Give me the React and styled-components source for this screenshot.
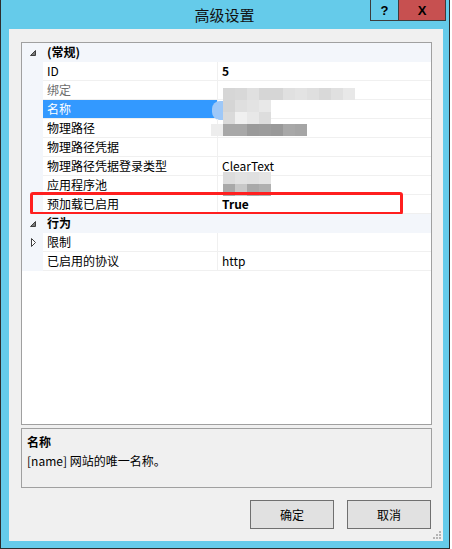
import React from 'react';
import styled, { createGlobalStyle, css } from 'styled-components';

const GlobalStyle = createGlobalStyle`
    html, body {
        margin: 0;
        padding: 0;
        background: #ffffff;
    }
    body {
        font-family: "Noto Sans CJK SC", "Liberation Sans", sans-serif;
        font-size: 12px;
        color: #000;
    }
`;

// window frame
const Frame = styled.div`
    box-sizing: border-box;
    width: 450px;
    height: 549px;
    background: #65cbea;
    border: 1px solid #2d2d2d;
    border-top: none;
    display: flex;
    flex-direction: column;
`;

const TitleBar = styled.div`
    height: 29px;
    display: grid;
    grid-template-columns: 1fr auto 1fr;
    align-items: start;
    padding-right: 3px;
`;

const Caption = styled.div`
    grid-column: 2;
    font-size: 15px;
    line-height: 29px;
    color: #111;
    margin-left: 2px;
`;

const CaptionButtons = styled.div`
    grid-column: 3;
    justify-self: end;
    display: flex;
`;

const CapBtn = styled.div`
    box-sizing: border-box;
    height: 21px;
    width: ${p => p.$w}px;
    display: flex;
    align-items: center;
    justify-content: center;
    font-family: "Liberation Sans", sans-serif;
    font-weight: bold;
    font-size: 13px;
    color: #000;
    border: 1px solid #3c3c3c;
    border-top: none;
    background: ${p => p.$bg || 'transparent'};
    & + & {
        border-left: none;
    }
`;

const Client = styled.div`
    position: relative;
    box-sizing: border-box;
    margin: 0 6px 0 8px;
    height: 512px;
    background: #f0f0f0;
    padding: 13px 11px 0 12px;
    display: flex;
    flex-direction: column;
`;

// property grid
const Grid = styled.div`
    box-sizing: border-box;
    height: 383px;
    border: 1px solid #a0a0a0;
    background: #fff;
    display: flex;
    flex-direction: column;
`;

const Row = styled.div`
    position: relative;
    display: grid;
    grid-template-columns: 21px 175px 1fr;
    height: 19px;
    ${p => p.$category && css`
        background: #f3f6fb;
    `}
`;

const Gutter = styled.div`
    background: #f3f6fb;
    display: flex;
    align-items: center;
    padding-left: ${p => p.$collapsed ? 9 : 8}px;
`;

const cellBase = css`
    box-sizing: border-box;
    height: 19px;
    line-height: 18px;
    padding-left: 4px;
    white-space: nowrap;
    border-bottom: 1px solid #f0f0f0;
`;

const Label = styled.div`
    ${cellBase}
    border-right: 1px solid #f0f0f0;
    color: ${p => p.$readonly ? '#6d6d6d' : '#000'};
    ${p => p.$selected && css`
        background: #3399ff;
        color: #fff;
    `}
`;

const Value = styled.div`
    ${cellBase}
    position: relative;
    font-weight: ${p => p.$bold ? 'bold' : 'normal'};
`;

const CategoryTitle = styled.div`
    grid-column: 2 / 4;
    line-height: 18px;
    padding-left: 4px;
    font-weight: bold;
`;

// pixelated redaction laid over the value
const Mosaic = styled.div`
    position: absolute;
    top: ${p => p.$top}px;
    left: ${p => p.$left}px;
    display: grid;
    grid-auto-rows: 12px;
    grid-template-columns: repeat(${p => p.$cols}, 12px);
`;

const Tile = styled.div`
    background: ${p => p.$c};
`;

const Glow = styled.div`
    position: absolute;
    left: -6px;
    top: 1px;
    width: 12px;
    height: 19px;
    border-radius: 8px 0 0 8px;
    background: #9ec8f8;
`;

const Highlight = styled.div`
    position: absolute;
    left: 8px;
    top: -3px;
    width: 373px;
    height: 23px;
    box-sizing: border-box;
    border: 3px solid #ff1f1f;
    border-radius: 3px;
    pointer-events: none;
`;

// description panel
const Desc = styled.div`
    box-sizing: border-box;
    margin-top: 3px;
    height: 60px;
    border: 1px solid #a0a0a0;
    padding: 3px 5px;
    line-height: 19px;
`;

const DescTitle = styled.div`
    font-weight: bold;
`;

const Footer = styled.div`
    margin-top: 12px;
    display: flex;
    justify-content: flex-end;
    gap: 13px;
    padding-right: 1px;
`;

const Button = styled.button`
    box-sizing: border-box;
    width: 84px;
    height: 29px;
    background: #e1e1e1;
    border: 1px solid #707070;
    font-family: "Noto Sans CJK SC", sans-serif;
    font-size: 12px;
    color: #000;
    padding: 0;
`;

const Grip = styled.svg`
    position: absolute;
    right: 2px;
    bottom: 2px;
`;

const Expanded = () => (
    <svg width="6" height="6" viewBox="0 0 6 6">
        <polygon points="5.5,0.5 5.5,5.5 0.5,5.5" fill="#7a7a7a" stroke="#404040" strokeWidth="1" />
    </svg>
);

const Collapsed = () => (
    <svg width="6" height="9" viewBox="0 0 6 9">
        <polygon points="0.5,0.5 4.5,4.5 0.5,8.5" fill="#fff" stroke="#404040" strokeWidth="1" />
    </svg>
);

const mosaics = {
    binding: { top: 7, left: 5, cols: 11, tiles: ['#d6d6d6', '#d8d8d8', '#e0e0e0', '#d6d6d6', '#d6d6d6', '#e0e0e0', '#e3e3e3', '#dfdfdf', '#d9d9d9', '#e0e0e0', '#e8e8e8'] },
    name: { top: 0, left: 5, cols: 4, tiles: ['#d5d5d5', '#dfdfdf', '#e3e3e3', '#e8e8e8', '#dadada', '#f0f0f0', '#e8e8e8', '#dddddd'] },
    path: { top: 5, left: -7, cols: 8, tiles: ['#ededed', '#a8a8a8', '#a8a8a8', '#9a9a9a', '#9c9c9c', '#999999', '#a8a8a8', '#a5a5a5'] },
    pool: { top: -4, left: 5, cols: 4, tiles: ['#dcdcdc', '#e2e2e2', '#e0e0e0', '#e4e4e4', '#a9a9a9', '#c8c8c8', '#a9a9a9', '#b0b0b0'] },
};

const Redacted = ({ m, glow }) => (
    <>
        {glow && <Glow />}
        <Mosaic $top={m.top} $left={m.left} $cols={m.cols}>
            {m.tiles.map((c, i) => <Tile key={i} $c={c} />)}
        </Mosaic>
    </>
);

const rows = [
    { category: '(常规)' },
    { label: 'ID', value: '5', bold: true },
    { label: '绑定', readonly: true, mosaic: 'binding' },
    { label: '名称', selected: true, mosaic: 'name', glow: true },
    { label: '物理路径', mosaic: 'path' },
    { label: '物理路径凭据', value: '' },
    { label: '物理路径凭据登录类型', value: 'ClearText' },
    { label: '应用程序池', mosaic: 'pool' },
    { label: '预加载已启用', value: 'True', bold: true, marked: true },
    { category: '行为' },
    { label: '限制', value: '', collapsed: true },
    { label: '已启用的协议', value: 'http' },
];

export default function App() {
    return (
        <>
            <GlobalStyle />
            <Frame>
                <TitleBar>
                    <Caption>高级设置</Caption>
                    <CaptionButtons>
                        <CapBtn $w={29}>?</CapBtn>
                        <CapBtn $w={47} $bg="#c75050">X</CapBtn>
                    </CaptionButtons>
                </TitleBar>
                <Client>
                    <Grid>
                        {rows.map((r, i) => r.category ? (
                            <Row key={i} $category>
                                <Gutter><Expanded /></Gutter>
                                <CategoryTitle>{r.category}</CategoryTitle>
                            </Row>
                        ) : (
                            <Row key={i}>
                                <Gutter $collapsed={r.collapsed}>{r.collapsed && <Collapsed />}</Gutter>
                                <Label $readonly={r.readonly} $selected={r.selected}>{r.label}</Label>
                                <Value $bold={r.bold}>
                                    {r.value}
                                    {r.mosaic && <Redacted m={mosaics[r.mosaic]} glow={r.glow} />}
                                </Value>
                                {r.marked && <Highlight />}
                            </Row>
                        ))}
                    </Grid>
                    <Desc>
                        <DescTitle>名称</DescTitle>
                        <div>[name] 网站的唯一名称。</div>
                    </Desc>
                    <Footer>
                        <Button>确定</Button>
                        <Button>取消</Button>
                    </Footer>
                    <Grip width="8" height="8" viewBox="0 0 8 8">
                        <rect x="6" y="0" width="2" height="2" fill="#b4b4b4" />
                        <rect x="3" y="3" width="2" height="2" fill="#b4b4b4" />
                        <rect x="6" y="3" width="2" height="2" fill="#b4b4b4" />
                        <rect x="0" y="6" width="2" height="2" fill="#b4b4b4" />
                        <rect x="3" y="6" width="2" height="2" fill="#b4b4b4" />
                        <rect x="6" y="6" width="2" height="2" fill="#b4b4b4" />
                    </Grip>
                </Client>
            </Frame>
        </>
    );
}
